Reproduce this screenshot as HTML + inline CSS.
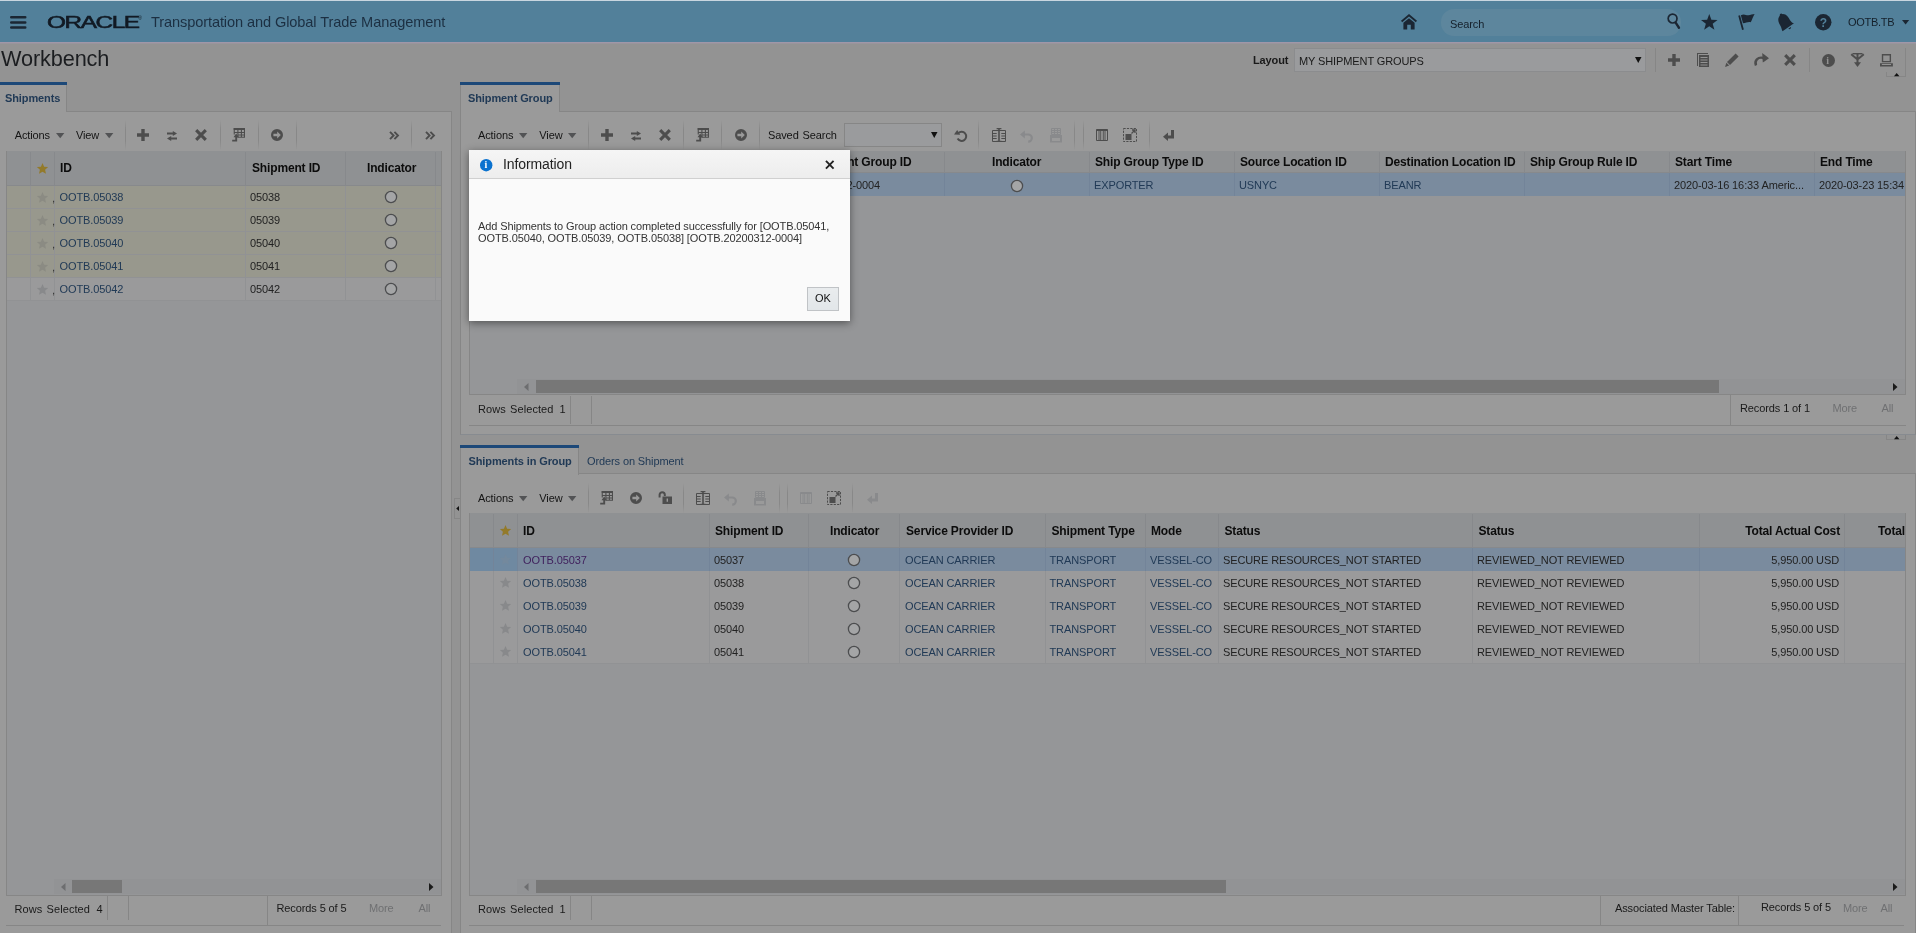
<!DOCTYPE html>
<html lang="en"><head><meta charset="utf-8"><title>Workbench</title><style>
html,body{margin:0;padding:0}
html{width:1916px;height:933px;overflow:hidden}
body{will-change:transform;width:1916px;height:933px;overflow:hidden;position:relative;background:#939393;font-family:"Liberation Sans",sans-serif;color:#161616}
body div,body svg.i,body span.t{position:absolute}
span.t{white-space:nowrap;letter-spacing:-0.11px}
svg.i{overflow:visible;stroke-width:0}
</style></head><body>
<div style="left:0px;top:0px;width:1916px;height:1px;background:#c9d6e0;"></div>
<div style="left:0px;top:1px;width:1916px;height:41px;background:#52809a;"></div>
<div style="left:0px;top:42px;width:1916px;height:1px;background:#a097a8;"></div>
<div style="left:0px;top:43px;width:1916px;height:1px;background:#99949c;"></div>
<svg class="i" style="left:10.05px;top:15.8px;" width="16.5" height="13" viewBox="0 0 16.5 13" fill="#1b2633" stroke="#1b2633"><path fill="none" stroke-width="2.500" stroke-linecap="round" d="M1.250 1.250h14M1.250 6.400h14M1.250 11.550h14"/></svg>
<span class="t" style="left:47px;top:11.800px;font-size:15.600px;line-height:22px;color:#121a24;letter-spacing:-0.900px;-webkit-text-stroke:0.550px #121a24;transform-origin:0 50%;transform:scaleX(1.560)">ORACLE</span>
<span class="t " style="top:14.5px;font-size:5px;line-height:6px;left:138.3px;color:#121a24;">&#174;</span>
<span class="t " style="top:13px;font-size:14.6px;line-height:18px;left:151px;color:#1c2f42;">Transportation and Global Trade Management</span>
<svg class="i" style="left:1401px;top:14.45px;" width="16" height="15.5" viewBox="0 0 16 15.5" fill="#1b2633" stroke="#1b2633"><path stroke="none" d="M8 0L16 6.800l-1.200 1.400L8 2.600 1.200 8.200 0 6.800zM8 4.200l5.600 4.600v6.700H9.800v-4.700H6.200v4.700H2.400V8.800z"/></svg>
<div style="left:1441px;top:9px;width:240px;height:27px;background:#5d869d;border-radius:13px;"></div>
<span class="t " style="top:17px;font-size:11px;line-height:14px;left:1450px;color:#15202b;">Search</span>
<svg class="i" style="left:1666.75px;top:13.4px;" width="13.5" height="16.2" viewBox="0 0 15 18" fill="#1b2633" stroke="#1b2633"><circle cx="6.2" cy="6.2" r="4.9" fill="none" stroke-width="1.9"/><path fill="none" stroke-width="2.6" stroke-linecap="round" d="M9.6 10.6l3.7 5.8"/></svg>
<svg class="i" style="left:1700.52px;top:14.18px;" width="16.56" height="15.64" viewBox="0 0 18 17" fill="#1b2633" stroke="#1b2633"><path stroke="none" d="M9 0l2.3 6.2 6.7.3-5.3 4.1 1.9 6.4L9 13.3 3.4 17l1.9-6.400L0 6.500l6.700-.300z"/></svg>
<svg class="i" style="left:1737.95px;top:13.925px;" width="17.1" height="16.15" viewBox="0 0 18 17" fill="#1b2633" stroke="#1b2633"><path fill="none" stroke-width="1.9" d="M1.2 1.6L5.2 16.6"/><path stroke="none" d="M3 1.400C6.500-.800 8.500 1.600 11 1.300c2.300-.300 4.200-1.200 6.500-1.300C15.800 2.800 15 5.800 13.400 8.600 10.600 7.600 8 9.800 5.200 9.600z"/></svg>
<svg class="i" style="left:1776.92px;top:13.475px;transform:rotate(-18deg);" width="16.15" height="18.05" viewBox="0 0 17 19" fill="#1b2633" stroke="#1b2633"><path stroke="none" d="M5.400 1.200a1.500 1.500 0 0 1 2.900-.500C12.500 1.600 13.200 5.800 14.200 9.600c.500 2 1.600 3.300 2.800 4.100L3 17.800C2.600 16 3 14.400 2.700 12.400 2.100 8.600.800 4.600 5.400 1.200zM9.500 17.300l3.300-1a1.800 1.800 0 0 1-3.300 1z"/></svg>
<svg class="i" style="left:1815.26px;top:13.755px;" width="16.49" height="16.49" viewBox="0 0 17 17" fill="#1b2633" stroke="#1b2633"><circle cx="8.500" cy="8.500" r="8.500" stroke="none"/></svg>
<span class="t " style="top:15.5px;font-size:12px;line-height:14px;left:1819.8px;color:#52809a;font-weight:bold;letter-spacing:-0.150px;">?</span>
<span class="t " style="top:15px;font-size:11px;line-height:14px;left:1848px;color:#15202b;letter-spacing:-0.3px;">OOTB.TB</span>
<svg class="i" style="left:1902.2px;top:20.25px;" width="7.2" height="4.5" viewBox="0 0 8 5" fill="#1b2633" stroke="#1b2633"><path stroke="none" d="M0 0h8L4 5z"/></svg>
<span class="t " style="top:46px;font-size:21.7px;line-height:26px;left:1px;color:#1b1d20;">Workbench</span>
<span class="t " style="top:53px;font-size:11px;line-height:14px;left:1253px;color:#1a1a1a;font-weight:bold;">Layout</span>
<div style="left:1294px;top:48px;width:352px;height:24px;background:#9a9b9d;border:1px solid #8b8c8e;box-sizing:border-box;"></div>
<span class="t " style="top:54px;font-size:11px;line-height:14px;left:1299px;color:#1a1a1a;">MY SHIPMENT GROUPS</span>
<svg class="i" style="left:1634.75px;top:56.5px;" width="6.5" height="6" viewBox="0 0 6.5 6" fill="#111" stroke="#111"><path stroke="none" d="M0 0h6.500L3.250 6z"/></svg>
<div style="left:1655px;top:48px;width:1px;height:24px;background:#868686;"></div>
<svg class="i" style="left:1668px;top:54px;" width="12" height="12" viewBox="0 0 12 12" fill="#4d4d4d" stroke="#4d4d4d"><path stroke="none" d="M4.3 0h3.4v4.3H12v3.4H7.7V12H4.3V7.7H0V4.3h4.3z"/></svg>
<svg class="i" style="left:1697px;top:53px;" width="12" height="14" viewBox="0 0 12 14" fill="#4d4d4d" stroke="#4d4d4d"><path stroke="none" d="M0 0h11v1H1v12H0zM2 2h10v12H2zM3.500 4v1h7V4zM3.500 6.500v1h7v-1zM3.500 9v1h7V9zM3.500 11.500v1h7v-1z" fill-rule="evenodd"/></svg>
<svg class="i" style="left:1725px;top:53px;" width="14" height="14" viewBox="0 0 14 14" fill="#4d4d4d" stroke="#4d4d4d"><path stroke="none" d="M10.600.400l3 3L5 12 2 9zM1.400 9.800l2.800 2.800L0 14z"/></svg>
<svg class="i" style="left:1753.5px;top:53px;" width="15" height="13" viewBox="0 0 15 13" fill="#4d4d4d" stroke="#4d4d4d"><path fill="none" stroke-width="2.400" d="M2 12.500C0 7.500 4 3.500 9.500 5"/><path stroke="none" d="M8.200 0L15 5.200 8.800 9.600z"/></svg>
<svg class="i" style="left:1784px;top:54px;" width="12" height="12" viewBox="0 0 12 12" fill="#4d4d4d" stroke="#4d4d4d"><path fill="none" stroke-width="3.1" d="M1.2 1.2l9.6 9.6M10.8 1.2l-9.6 9.6"/></svg>
<div style="left:1809px;top:48px;width:1px;height:24px;background:#868686;"></div>
<svg class="i" style="left:1821.5px;top:53.5px;" width="13" height="13" viewBox="0 0 13 13" fill="#4d4d4d" stroke="#4d4d4d"><circle cx="6.500" cy="6.500" r="6.500" stroke="none"/></svg>
<span class="t " style="top:54.5px;font-size:10px;line-height:12px;left:1826.3px;color:#939393;font-weight:bold;font-family:'Liberation Serif',serif;">i</span>
<svg class="i" style="left:1849.5px;top:53px;" width="15" height="14" viewBox="0 0 15 14" fill="#4d4d4d" stroke="#4d4d4d"><path fill="none" stroke-width="2" d="M1.200 1.200l6.300 5.300L13.800 1.200M7.500 0.200v10"/><path fill="none" stroke-width="1.400" d="M2.500 0.700h10"/><path stroke="none" d="M4 9.300h7L7.500 14z"/></svg>
<svg class="i" style="left:1880.06px;top:53.56px;" width="12.88" height="12.88" viewBox="0 0 14 14" fill="#4d4d4d" stroke="#4d4d4d"><path stroke="none" fill-rule="evenodd" d="M2 0h10v9H2zM3.500 1.500v6h7v-6zM0 10h14v3.500H0zM2 11v1h10v-1z"/></svg>
<div style="left:1905px;top:48px;width:1px;height:24px;background:#868686;"></div>
<div style="left:1886px;top:72px;width:20px;height:5px;border:1px solid #868686;border-top:none;box-sizing:border-box;"></div>
<svg class="i" style="left:1893.8px;top:72.5px" width="5.400" height="3.200" viewBox="0 0 7 4" fill="#111"><path d="M0 4L3.500 0 7 4z"/></svg>
<div style="left:0px;top:111px;width:452px;height:822px;background:#9a9a9a;border-top:1px solid #868686;border-right:1px solid #868686;box-sizing:border-box;"></div>
<div style="left:-1px;top:82px;width:68px;height:30px;background:#9a9a9a;border-left:1px solid #868686;border-right:1px solid #868686;box-sizing:border-box;"></div>
<div style="left:-1px;top:82px;width:68px;height:3px;background:#1c4878;"></div>
<span class="t " style="top:91px;font-size:11px;line-height:14px;left:5px;color:#213a56;font-weight:bold;">Shipments</span>
<span class="t " style="top:128px;font-size:11px;line-height:14px;left:14.7px;color:#141414;">Actions</span>
<svg class="i" style="left:55.8px;top:133.375px;" width="8.4" height="5.25" viewBox="0 0 8 5" fill="#525355" stroke="#525355"><path stroke="none" d="M0 0h8L4 5z"/></svg>
<span class="t " style="top:128px;font-size:11px;line-height:14px;left:76px;color:#141414;">View</span>
<svg class="i" style="left:104.8px;top:133.375px;" width="8.4" height="5.25" viewBox="0 0 8 5" fill="#525355" stroke="#525355"><path stroke="none" d="M0 0h8L4 5z"/></svg>
<div style="left:125px;top:120px;width:1px;height:30px;background:linear-gradient(to bottom,rgba(134,134,134,0),#888 30%,#888 70%,rgba(134,134,134,0));"></div>
<svg class="i" style="left:137px;top:129px;" width="12" height="12" viewBox="0 0 12 12" fill="#4d4d4d" stroke="#4d4d4d"><path stroke="none" d="M4.3 0h3.4v4.3H12v3.4H7.7V12H4.3V7.7H0V4.3h4.3z"/></svg>
<svg class="i" style="left:167px;top:130.5px;" width="10" height="10" viewBox="0 0 10 10" fill="#4d4d4d" stroke="#4d4d4d"><path stroke="none" d="M0 1.500h5.800V0L10 2.500 5.800 5V3.500H0zM10 6.500H4.200V5L0 7.500 4.200 10V8.500H10z"/></svg>
<svg class="i" style="left:194.5px;top:129px;" width="12" height="12" viewBox="0 0 12 12" fill="#4d4d4d" stroke="#4d4d4d"><path fill="none" stroke-width="3.1" d="M1.2 1.2l9.6 9.6M10.8 1.2l-9.6 9.6"/></svg>
<div style="left:220px;top:120px;width:1px;height:30px;background:linear-gradient(to bottom,rgba(134,134,134,0),#888 30%,#888 70%,rgba(134,134,134,0));"></div>
<svg class="i" style="left:231.5px;top:128px;" width="14" height="14" viewBox="0 0 14 14" fill="#4d4d4d" stroke="#4d4d4d"><path stroke="none" d="M1.700 0H13v2H1.700z"/><path fill="none" stroke-width="1.100" d="M2.250 0v6.500M5.900 0v9.500M9.400 0v9.500M12.450 0v9.500M1.700 4.500H13M5.400 7H13M5.400 9.300H13"/><path fill="none" stroke-width="1.900" d="M0.200 12.600H4.200V8.500"/><path stroke="none" d="M4.200 5.600L6.900 9.200H1.500z"/></svg>
<div style="left:258px;top:120px;width:1px;height:30px;background:linear-gradient(to bottom,rgba(134,134,134,0),#888 30%,#888 70%,rgba(134,134,134,0));"></div>
<svg class="i" style="left:271px;top:129px;" width="12" height="12" viewBox="0 0 12 12" fill="#4d4d4d" stroke="#4d4d4d"><path stroke="none" fill-rule="evenodd" d="M6 0a6 6 0 1 0 0 12A6 6 0 0 0 6 0zM6.2 2.6L9.8 6 6.2 9.4V7.2H2.4V4.8h3.8z"/></svg>
<div style="left:296px;top:120px;width:1px;height:30px;background:linear-gradient(to bottom,rgba(134,134,134,0),#888 30%,#888 70%,rgba(134,134,134,0));"></div>
<svg class="i" style="left:389px;top:131px;" width="10" height="9" viewBox="0 0 10 9" fill="#4d4d4d" stroke="#4d4d4d"><path fill="none" stroke-width="1.900" d="M1 0.8L4.6 4.5 1 8.2M5.4 0.8L9 4.5 5.4 8.2"/></svg>
<div style="left:411px;top:120px;width:1px;height:30px;background:linear-gradient(to bottom,rgba(134,134,134,0),#888 30%,#888 70%,rgba(134,134,134,0));"></div>
<svg class="i" style="left:425px;top:131px;" width="10" height="9" viewBox="0 0 10 9" fill="#4d4d4d" stroke="#4d4d4d"><path fill="none" stroke-width="1.900" d="M1 0.8L4.6 4.5 1 8.2M5.4 0.8L9 4.5 5.4 8.2"/></svg>
<div style="left:6px;top:151px;width:436px;height:745px;background:#959698;border:1px solid #868686;box-sizing:border-box;"></div>
<div style="left:7px;top:151px;width:434px;height:34px;background:#8f9193;"></div>
<div style="left:7px;top:185px;width:434px;height:1px;background:#87898c;"></div>
<div style="left:30px;top:152px;width:1px;height:33px;background:#87898c;"></div>
<div style="left:54px;top:152px;width:1px;height:33px;background:#87898c;"></div>
<div style="left:245px;top:152px;width:1px;height:33px;background:#87898c;"></div>
<div style="left:345px;top:152px;width:1px;height:33px;background:#87898c;"></div>
<div style="left:435px;top:152px;width:1px;height:33px;background:#87898c;"></div>
<svg class="i" style="left:36.5px;top:162.5px;" width="11" height="11" viewBox="0 0 11 11" fill="#937a2a" stroke="#937a2a"><path stroke="none" d="M5.500 0l1.600 3.800 4 .300-3 2.700.9 4L5.500 8.700 2 10.800l.9-4-3-2.700 4-.300z"/></svg>
<span class="t " style="top:161px;font-size:12px;line-height:14px;left:60px;color:#0c0c0c;font-weight:bold;letter-spacing:-0.150px;">ID</span>
<span class="t " style="top:161px;font-size:12px;line-height:14px;left:252px;color:#0c0c0c;font-weight:bold;letter-spacing:-0.150px;">Shipment ID</span>
<span class="t " style="top:161px;font-size:12px;line-height:14px;left:367px;color:#0c0c0c;font-weight:bold;letter-spacing:-0.150px;">Indicator</span>
<div style="left:7px;top:186px;width:434px;height:22px;background:#98988d;"></div>
<div style="left:7px;top:208px;width:434px;height:1px;background:#919294;"></div>
<div style="left:30px;top:186px;width:1px;height:23px;background:#919294;"></div>
<div style="left:54px;top:186px;width:1px;height:23px;background:#919294;"></div>
<div style="left:245px;top:186px;width:1px;height:23px;background:#919294;"></div>
<div style="left:345px;top:186px;width:1px;height:23px;background:#919294;"></div>
<div style="left:435px;top:186px;width:1px;height:23px;background:#919294;"></div>
<svg class="i" style="left:36.5px;top:192px;" width="11" height="11" viewBox="0 0 11 11" fill="#8b8b83" stroke="#8b8b83"><path stroke="none" d="M5.500 0l1.600 3.800 4 .300-3 2.700.9 4L5.500 8.700 2 10.800l.9-4-3-2.700 4-.300z"/></svg>
<span class="t " style="top:191.5px;font-size:10px;line-height:14px;left:52.2px;color:#2a2a2a;">,</span>
<span class="t " style="top:189.5px;font-size:11px;line-height:14px;left:59.5px;color:#213a56;">OOTB.05038</span>
<span class="t " style="top:189.5px;font-size:11px;line-height:14px;left:250px;color:#222;">05038</span>
<svg class="i" style="left:384px;top:190px" width="14" height="14" viewBox="0 0 14 14"><circle cx="7" cy="7" r="5.600" fill="#a4a5a6" stroke="#4c4d4f" stroke-width="1.300"/></svg>
<div style="left:7px;top:209px;width:434px;height:22px;background:#98988d;"></div>
<div style="left:7px;top:231px;width:434px;height:1px;background:#919294;"></div>
<div style="left:30px;top:209px;width:1px;height:23px;background:#919294;"></div>
<div style="left:54px;top:209px;width:1px;height:23px;background:#919294;"></div>
<div style="left:245px;top:209px;width:1px;height:23px;background:#919294;"></div>
<div style="left:345px;top:209px;width:1px;height:23px;background:#919294;"></div>
<div style="left:435px;top:209px;width:1px;height:23px;background:#919294;"></div>
<svg class="i" style="left:36.5px;top:215px;" width="11" height="11" viewBox="0 0 11 11" fill="#8b8b83" stroke="#8b8b83"><path stroke="none" d="M5.500 0l1.600 3.800 4 .300-3 2.700.9 4L5.500 8.700 2 10.800l.9-4-3-2.700 4-.300z"/></svg>
<span class="t " style="top:214.5px;font-size:10px;line-height:14px;left:52.2px;color:#2a2a2a;">,</span>
<span class="t " style="top:212.5px;font-size:11px;line-height:14px;left:59.5px;color:#213a56;">OOTB.05039</span>
<span class="t " style="top:212.5px;font-size:11px;line-height:14px;left:250px;color:#222;">05039</span>
<svg class="i" style="left:384px;top:213px" width="14" height="14" viewBox="0 0 14 14"><circle cx="7" cy="7" r="5.600" fill="#a4a5a6" stroke="#4c4d4f" stroke-width="1.300"/></svg>
<div style="left:7px;top:232px;width:434px;height:22px;background:#98988d;"></div>
<div style="left:7px;top:254px;width:434px;height:1px;background:#919294;"></div>
<div style="left:30px;top:232px;width:1px;height:23px;background:#919294;"></div>
<div style="left:54px;top:232px;width:1px;height:23px;background:#919294;"></div>
<div style="left:245px;top:232px;width:1px;height:23px;background:#919294;"></div>
<div style="left:345px;top:232px;width:1px;height:23px;background:#919294;"></div>
<div style="left:435px;top:232px;width:1px;height:23px;background:#919294;"></div>
<svg class="i" style="left:36.5px;top:238px;" width="11" height="11" viewBox="0 0 11 11" fill="#8b8b83" stroke="#8b8b83"><path stroke="none" d="M5.500 0l1.600 3.800 4 .300-3 2.700.9 4L5.500 8.700 2 10.800l.9-4-3-2.700 4-.300z"/></svg>
<span class="t " style="top:237.5px;font-size:10px;line-height:14px;left:52.2px;color:#2a2a2a;">,</span>
<span class="t " style="top:235.5px;font-size:11px;line-height:14px;left:59.5px;color:#213a56;">OOTB.05040</span>
<span class="t " style="top:235.5px;font-size:11px;line-height:14px;left:250px;color:#222;">05040</span>
<svg class="i" style="left:384px;top:236px" width="14" height="14" viewBox="0 0 14 14"><circle cx="7" cy="7" r="5.600" fill="#a4a5a6" stroke="#4c4d4f" stroke-width="1.300"/></svg>
<div style="left:7px;top:255px;width:434px;height:22px;background:#98988d;"></div>
<div style="left:7px;top:277px;width:434px;height:1px;background:#919294;"></div>
<div style="left:30px;top:255px;width:1px;height:23px;background:#919294;"></div>
<div style="left:54px;top:255px;width:1px;height:23px;background:#919294;"></div>
<div style="left:245px;top:255px;width:1px;height:23px;background:#919294;"></div>
<div style="left:345px;top:255px;width:1px;height:23px;background:#919294;"></div>
<div style="left:435px;top:255px;width:1px;height:23px;background:#919294;"></div>
<svg class="i" style="left:36.5px;top:261px;" width="11" height="11" viewBox="0 0 11 11" fill="#8b8b83" stroke="#8b8b83"><path stroke="none" d="M5.500 0l1.600 3.800 4 .300-3 2.700.9 4L5.500 8.700 2 10.800l.9-4-3-2.700 4-.300z"/></svg>
<span class="t " style="top:260.5px;font-size:10px;line-height:14px;left:52.2px;color:#2a2a2a;">,</span>
<span class="t " style="top:258.5px;font-size:11px;line-height:14px;left:59.5px;color:#213a56;">OOTB.05041</span>
<span class="t " style="top:258.5px;font-size:11px;line-height:14px;left:250px;color:#222;">05041</span>
<svg class="i" style="left:384px;top:259px" width="14" height="14" viewBox="0 0 14 14"><circle cx="7" cy="7" r="5.600" fill="#a4a5a6" stroke="#4c4d4f" stroke-width="1.300"/></svg>
<div style="left:7px;top:278px;width:434px;height:22px;background:#9a9a9b;"></div>
<div style="left:7px;top:300px;width:434px;height:1px;background:#919294;"></div>
<div style="left:30px;top:278px;width:1px;height:23px;background:#919294;"></div>
<div style="left:54px;top:278px;width:1px;height:23px;background:#919294;"></div>
<div style="left:245px;top:278px;width:1px;height:23px;background:#919294;"></div>
<div style="left:345px;top:278px;width:1px;height:23px;background:#919294;"></div>
<div style="left:435px;top:278px;width:1px;height:23px;background:#919294;"></div>
<svg class="i" style="left:36.5px;top:284px;" width="11" height="11" viewBox="0 0 11 11" fill="#88898b" stroke="#88898b"><path stroke="none" d="M5.500 0l1.600 3.800 4 .300-3 2.700.9 4L5.500 8.700 2 10.800l.9-4-3-2.700 4-.300z"/></svg>
<span class="t " style="top:283.5px;font-size:10px;line-height:14px;left:52.2px;color:#2a2a2a;">,</span>
<span class="t " style="top:281.5px;font-size:11px;line-height:14px;left:59.5px;color:#213a56;">OOTB.05042</span>
<span class="t " style="top:281.5px;font-size:11px;line-height:14px;left:250px;color:#222;">05042</span>
<svg class="i" style="left:384px;top:282px" width="14" height="14" viewBox="0 0 14 14"><circle cx="7" cy="7" r="5.600" fill="#a4a5a6" stroke="#4c4d4f" stroke-width="1.300"/></svg>
<div style="left:54px;top:879px;width:387px;height:15px;background:#929395;"></div>
<div style="left:72px;top:880px;width:50px;height:13px;background:#777777;"></div>
<svg class="i" style="left:61px;top:882.5px" width="4.500" height="8" viewBox="0 0 5 9" fill="#6d6e70"><path d="M5 0v9L0 4.500z"/></svg>
<svg class="i" style="left:429px;top:882.5px" width="4.500" height="8" viewBox="0 0 5 9" fill="#1a1a1a"><path d="M0 0v9l5-4.500z"/></svg>
<span class="t " style="top:902px;font-size:11px;line-height:14px;left:14.5px;color:#1a1a1a;word-spacing:1px;letter-spacing:0.090px;">Rows Selected</span>
<span class="t " style="top:902px;font-size:11px;line-height:14px;right:1813.4px;color:#1a1a1a;">4</span>
<div style="left:107px;top:896px;width:1px;height:24px;background:#868686;"></div>
<div style="left:128px;top:896px;width:1px;height:24px;background:#868686;"></div>
<div style="left:267px;top:896px;width:1px;height:29px;background:#868686;"></div>
<span class="t " style="top:901px;font-size:11px;line-height:14px;left:276.5px;color:#1a1a1a;">Records 5 of 5</span>
<span class="t " style="top:901px;font-size:11px;line-height:14px;left:369px;color:#6f7072;">More</span>
<span class="t " style="top:901px;font-size:11px;line-height:14px;left:418.5px;color:#6f7072;">All</span>
<div style="left:6px;top:925px;width:435px;height:1px;background:#868686;"></div>
<div style="left:454px;top:498px;width:7px;height:21px;border:1px solid #868686;border-right:none;box-sizing:border-box;"></div>
<svg class="i" style="left:455.800px;top:506px" width="3.200" height="5" viewBox="0 0 4 7" fill="#111"><path d="M4 0v7L0 3.500z"/></svg>
<div style="left:460px;top:111px;width:1456px;height:324px;background:#9a9a9a;border:1px solid #868686;border-bottom-color:#878b90;box-sizing:border-box;"></div>
<div style="left:460px;top:82px;width:100px;height:30px;background:#9a9a9a;border-left:1px solid #868686;border-right:1px solid #868686;box-sizing:border-box;"></div>
<div style="left:460px;top:82px;width:100px;height:3px;background:#1c4878;"></div>
<span class="t " style="top:91px;font-size:11px;line-height:14px;left:468px;color:#213a56;font-weight:bold;">Shipment Group</span>
<span class="t " style="top:128px;font-size:11px;line-height:14px;left:478px;color:#141414;">Actions</span>
<svg class="i" style="left:519.1px;top:133.375px;" width="8.4" height="5.25" viewBox="0 0 8 5" fill="#525355" stroke="#525355"><path stroke="none" d="M0 0h8L4 5z"/></svg>
<span class="t " style="top:128px;font-size:11px;line-height:14px;left:539.3px;color:#141414;">View</span>
<svg class="i" style="left:568.1px;top:133.375px;" width="8.4" height="5.25" viewBox="0 0 8 5" fill="#525355" stroke="#525355"><path stroke="none" d="M0 0h8L4 5z"/></svg>
<div style="left:588px;top:120px;width:1px;height:30px;background:linear-gradient(to bottom,rgba(134,134,134,0),#888 30%,#888 70%,rgba(134,134,134,0));"></div>
<svg class="i" style="left:600.5px;top:129px;" width="12" height="12" viewBox="0 0 12 12" fill="#4d4d4d" stroke="#4d4d4d"><path stroke="none" d="M4.3 0h3.4v4.3H12v3.4H7.7V12H4.3V7.7H0V4.3h4.3z"/></svg>
<svg class="i" style="left:630.5px;top:130.5px;" width="10" height="10" viewBox="0 0 10 10" fill="#4d4d4d" stroke="#4d4d4d"><path stroke="none" d="M0 1.500h5.800V0L10 2.500 5.800 5V3.500H0zM10 6.500H4.200V5L0 7.500 4.200 10V8.500H10z"/></svg>
<svg class="i" style="left:658.5px;top:129px;" width="12" height="12" viewBox="0 0 12 12" fill="#4d4d4d" stroke="#4d4d4d"><path fill="none" stroke-width="3.1" d="M1.2 1.2l9.6 9.6M10.8 1.2l-9.6 9.6"/></svg>
<div style="left:683px;top:120px;width:1px;height:30px;background:linear-gradient(to bottom,rgba(134,134,134,0),#888 30%,#888 70%,rgba(134,134,134,0));"></div>
<svg class="i" style="left:695.5px;top:128px;" width="14" height="14" viewBox="0 0 14 14" fill="#4d4d4d" stroke="#4d4d4d"><path stroke="none" d="M1.700 0H13v2H1.700z"/><path fill="none" stroke-width="1.100" d="M2.250 0v6.500M5.900 0v9.500M9.400 0v9.500M12.450 0v9.500M1.700 4.500H13M5.400 7H13M5.400 9.300H13"/><path fill="none" stroke-width="1.900" d="M0.200 12.600H4.200V8.500"/><path stroke="none" d="M4.200 5.600L6.900 9.200H1.500z"/></svg>
<div style="left:721px;top:120px;width:1px;height:30px;background:linear-gradient(to bottom,rgba(134,134,134,0),#888 30%,#888 70%,rgba(134,134,134,0));"></div>
<svg class="i" style="left:734.5px;top:129px;" width="12" height="12" viewBox="0 0 12 12" fill="#4d4d4d" stroke="#4d4d4d"><path stroke="none" fill-rule="evenodd" d="M6 0a6 6 0 1 0 0 12A6 6 0 0 0 6 0zM6.2 2.6L9.8 6 6.2 9.4V7.2H2.4V4.8h3.8z"/></svg>
<div style="left:759px;top:120px;width:1px;height:30px;background:linear-gradient(to bottom,rgba(134,134,134,0),#888 30%,#888 70%,rgba(134,134,134,0));"></div>
<span class="t " style="top:128px;font-size:11px;line-height:14px;left:768px;color:#141414;word-spacing:1px;">Saved Search</span>
<div style="left:844px;top:123px;width:98px;height:24px;background:#9a9b9d;border:1px solid #868686;box-sizing:border-box;"></div>
<svg class="i" style="left:930.75px;top:132px;" width="6.5" height="6" viewBox="0 0 6.5 6" fill="#111" stroke="#111"><path stroke="none" d="M0 0h6.500L3.250 6z"/></svg>
<svg class="i" style="left:953.5px;top:129.5px;" width="14" height="12" viewBox="0 0 14 12" fill="#4d4d4d" stroke="#4d4d4d"><path fill="none" stroke-width="2" d="M4.3 3.1A4.6 4.6 0 1 1 3.6 8.6"/><path stroke="none" d="M0 4.6L6.2 4.8 3.2 0z"/></svg>
<div style="left:978px;top:120px;width:1px;height:30px;background:linear-gradient(to bottom,rgba(134,134,134,0),#888 30%,#888 70%,rgba(134,134,134,0));"></div>
<svg class="i" style="left:991.5px;top:128px;" width="14" height="14" viewBox="0 0 14 14" fill="#4d4d4d" stroke="#4d4d4d"><path fill="none" stroke-width="1" d="M0.500 2.500h13v11h-13zM9.300 5.500h4.200M9.300 8h4.200M9.300 10.500h4.200M0.500 5.500h4.200M0.500 8h4.200M0.500 10.500h4.200"/><path fill="none" stroke-width="1.600" d="M7 0.800v12.400"/><path fill="none" stroke-width="1.200" d="M4.600 0.600h4.800M4.600 13.400h4.800"/></svg>
<svg class="i" style="left:1020px;top:129.5px;" width="14" height="12" viewBox="0 0 14 12" fill="#898a8c" stroke="#898a8c"><path fill="none" stroke-width="2.2" d="M3 4.5h5.2a3.6 3.6 0 0 1 0 7.2"/><path stroke="none" d="M0 4.5L4.8 0.6v7.8z"/></svg>
<svg class="i" style="left:1049.5px;top:128px;" width="12" height="15" viewBox="0 0 12 15" fill="#898a8c" stroke="#898a8c"><path fill="none" stroke-width="1" d="M1.500 0.500h9v6h-9zM1.500 2.500h9M1.500 4.500h9M4.500 0.500v6M7.500 0.500v6"/><path stroke="none" d="M0 7h12v7.500H0zM2 10v3h8v-3z" fill-rule="evenodd"/></svg>
<div style="left:1074px;top:120px;width:1px;height:30px;background:linear-gradient(to bottom,rgba(134,134,134,0),#888 30%,#888 70%,rgba(134,134,134,0));"></div>
<div style="left:1083px;top:120px;width:1px;height:30px;background:linear-gradient(to bottom,rgba(134,134,134,0),#888 30%,#888 70%,rgba(134,134,134,0));"></div>
<svg class="i" style="left:1095.5px;top:129px;" width="12" height="12" viewBox="0 0 12 12" fill="#4d4d4d" stroke="#4d4d4d"><path fill="none" stroke-width="1" d="M0.500 0.500h11v11h-11z"/><path fill="none" stroke-width="0.900" d="M3 1v10M4.700 1v10M7.300 1v10M9 1v10"/><path stroke="none" d="M0.500 0.500h11v1.500h-11z"/></svg>
<svg class="i" style="left:1123px;top:128px;" width="14" height="14" viewBox="0 0 14 14" fill="#4d4d4d" stroke="#4d4d4d"><path fill="none" stroke-width="1" stroke-dasharray="2.2 1.2" d="M0.5 0.5h13v13h-13z"/><path stroke="none" d="M2.5 6h6v6h-6z"/><path fill="none" stroke-width="1.3" d="M8.5 5.5l3.5-3.5M9 2h3v3"/></svg>
<div style="left:1149px;top:120px;width:1px;height:30px;background:linear-gradient(to bottom,rgba(134,134,134,0),#888 30%,#888 70%,rgba(134,134,134,0));"></div>
<svg class="i" style="left:1163px;top:129.5px;" width="11" height="11" viewBox="0 0 11 11" fill="#4d4d4d" stroke="#4d4d4d"><path stroke="none" d="M8 0h3v8.4H5V11L0 6.8 5 2.6v2.8h3z"/></svg>
<div style="left:469px;top:151px;width:1437px;height:244px;background:#959698;border:1px solid #868686;box-sizing:border-box;"></div>
<div style="left:470px;top:151px;width:1435px;height:22px;background:#8f9193;"></div>
<div style="left:470px;top:173px;width:1435px;height:23px;background:#7a8b9e;"></div>
<div style="left:944px;top:152px;width:1px;height:21px;background:#87898c;"></div>
<div style="left:944px;top:173px;width:1px;height:23px;background:#738499;"></div>
<div style="left:1089px;top:152px;width:1px;height:21px;background:#87898c;"></div>
<div style="left:1089px;top:173px;width:1px;height:23px;background:#738499;"></div>
<div style="left:1234px;top:152px;width:1px;height:21px;background:#87898c;"></div>
<div style="left:1234px;top:173px;width:1px;height:23px;background:#738499;"></div>
<div style="left:1379px;top:152px;width:1px;height:21px;background:#87898c;"></div>
<div style="left:1379px;top:173px;width:1px;height:23px;background:#738499;"></div>
<div style="left:1524px;top:152px;width:1px;height:21px;background:#87898c;"></div>
<div style="left:1524px;top:173px;width:1px;height:23px;background:#738499;"></div>
<div style="left:1669px;top:152px;width:1px;height:21px;background:#87898c;"></div>
<div style="left:1669px;top:173px;width:1px;height:23px;background:#738499;"></div>
<div style="left:1814px;top:152px;width:1px;height:21px;background:#87898c;"></div>
<div style="left:1814px;top:173px;width:1px;height:23px;background:#738499;"></div>
<div style="left:470px;top:172px;width:1435px;height:1px;background:#87898c;"></div>
<span class="t " style="top:155px;font-size:12px;line-height:14px;right:1004.5px;color:#0c0c0c;font-weight:bold;letter-spacing:-0.150px;">Shipment Group ID</span>
<span class="t " style="top:155px;font-size:12px;line-height:14px;left:992px;color:#0c0c0c;font-weight:bold;letter-spacing:-0.150px;">Indicator</span>
<span class="t " style="top:155px;font-size:12px;line-height:14px;left:1095px;color:#0c0c0c;font-weight:bold;letter-spacing:-0.150px;">Ship Group Type ID</span>
<span class="t " style="top:155px;font-size:12px;line-height:14px;left:1240px;color:#0c0c0c;font-weight:bold;letter-spacing:-0.150px;">Source Location ID</span>
<span class="t " style="top:155px;font-size:12px;line-height:14px;left:1385px;color:#0c0c0c;font-weight:bold;letter-spacing:-0.150px;">Destination Location ID</span>
<span class="t " style="top:155px;font-size:12px;line-height:14px;left:1530px;color:#0c0c0c;font-weight:bold;letter-spacing:-0.150px;">Ship Group Rule ID</span>
<span class="t " style="top:155px;font-size:12px;line-height:14px;left:1675px;color:#0c0c0c;font-weight:bold;letter-spacing:-0.150px;">Start Time</span>
<span class="t " style="top:155px;font-size:12px;line-height:14px;left:1820px;color:#0c0c0c;font-weight:bold;letter-spacing:-0.150px;">End Time</span>
<span class="t " style="top:178px;font-size:11px;line-height:14px;right:1036px;color:#222;">OOTB.20200312-0004</span>
<svg class="i" style="left:1009.5px;top:178.5px" width="14" height="14" viewBox="0 0 14 14"><circle cx="7" cy="7" r="5.600" fill="#a4a5a6" stroke="#4c4d4f" stroke-width="1.300"/></svg>
<span class="t " style="top:178px;font-size:11px;line-height:14px;left:1094px;color:#213a56;">EXPORTER</span>
<span class="t " style="top:178px;font-size:11px;line-height:14px;left:1239px;color:#213a56;">USNYC</span>
<span class="t " style="top:178px;font-size:11px;line-height:14px;left:1384px;color:#213a56;">BEANR</span>
<span class="t " style="top:178px;font-size:11px;line-height:14px;left:1674px;color:#222;">2020-03-16 16:33 Americ...</span>
<div style="left:1819px;top:178px;width:86px;height:14px;overflow:hidden"><span class="t" style="left:0;top:0;font-size:11px;line-height:14px;color:#222">2020-03-23 15:34 America</span></div>
<div style="left:517px;top:379px;width:1388px;height:15px;background:#929395;"></div>
<div style="left:536px;top:380px;width:1183px;height:13px;background:#777777;"></div>
<svg class="i" style="left:524px;top:382.5px" width="4.500" height="8" viewBox="0 0 5 9" fill="#6d6e70"><path d="M5 0v9L0 4.500z"/></svg>
<svg class="i" style="left:1893px;top:382.5px" width="4.500" height="8" viewBox="0 0 5 9" fill="#1a1a1a"><path d="M0 0v9l5-4.500z"/></svg>
<span class="t " style="top:402px;font-size:11px;line-height:14px;left:478px;color:#1a1a1a;word-spacing:1px;letter-spacing:0.090px;">Rows Selected</span>
<span class="t " style="top:402px;font-size:11px;line-height:14px;right:1350.4px;color:#1a1a1a;">1</span>
<div style="left:570px;top:396px;width:1px;height:28px;background:#868686;"></div>
<div style="left:591px;top:396px;width:1px;height:28px;background:#868686;"></div>
<div style="left:1730px;top:395px;width:1px;height:30px;background:#868686;"></div>
<span class="t " style="top:401px;font-size:11px;line-height:14px;left:1740px;color:#1a1a1a;">Records 1 of 1</span>
<span class="t " style="top:401px;font-size:11px;line-height:14px;left:1832.5px;color:#6f7072;">More</span>
<span class="t " style="top:401px;font-size:11px;line-height:14px;left:1881.5px;color:#6f7072;">All</span>
<div style="left:469px;top:425px;width:1437px;height:1px;background:#868686;"></div>
<div style="left:1886px;top:435px;width:20px;height:5px;border:1px solid #868686;border-top:none;box-sizing:border-box;"></div>
<svg class="i" style="left:1893.8px;top:435.5px" width="5.400" height="3.200" viewBox="0 0 7 4" fill="#111"><path d="M0 4L3.500 0 7 4z"/></svg>
<div style="left:460px;top:473px;width:1456px;height:460px;background:#9a9a9a;border:1px solid #868686;border-bottom:none;box-sizing:border-box;"></div>
<div style="left:460px;top:445px;width:119px;height:30px;background:#9a9a9a;border-left:1px solid #868686;border-right:1px solid #868686;box-sizing:border-box;"></div>
<div style="left:460px;top:445px;width:119px;height:3px;background:#1c4878;"></div>
<span class="t " style="top:454px;font-size:11px;line-height:14px;left:468.5px;color:#213a56;font-weight:bold;">Shipments in Group</span>
<span class="t " style="top:454px;font-size:11px;line-height:14px;left:587px;color:#213a56;">Orders on Shipment</span>
<span class="t " style="top:491px;font-size:11px;line-height:14px;left:478px;color:#141414;">Actions</span>
<svg class="i" style="left:519.1px;top:496.375px;" width="8.4" height="5.25" viewBox="0 0 8 5" fill="#525355" stroke="#525355"><path stroke="none" d="M0 0h8L4 5z"/></svg>
<span class="t " style="top:491px;font-size:11px;line-height:14px;left:539.3px;color:#141414;">View</span>
<svg class="i" style="left:568.1px;top:496.375px;" width="8.4" height="5.25" viewBox="0 0 8 5" fill="#525355" stroke="#525355"><path stroke="none" d="M0 0h8L4 5z"/></svg>
<div style="left:588px;top:483px;width:1px;height:30px;background:linear-gradient(to bottom,rgba(134,134,134,0),#888 30%,#888 70%,rgba(134,134,134,0));"></div>
<svg class="i" style="left:599.5px;top:491px;" width="14" height="14" viewBox="0 0 14 14" fill="#4d4d4d" stroke="#4d4d4d"><path stroke="none" d="M1.700 0H13v2H1.700z"/><path fill="none" stroke-width="1.100" d="M2.250 0v6.500M5.900 0v9.500M9.400 0v9.500M12.450 0v9.500M1.700 4.500H13M5.400 7H13M5.400 9.300H13"/><path fill="none" stroke-width="1.900" d="M0.200 12.600H4.200V8.500"/><path stroke="none" d="M4.200 5.600L6.900 9.200H1.500z"/></svg>
<svg class="i" style="left:629.5px;top:492px;" width="12" height="12" viewBox="0 0 12 12" fill="#4d4d4d" stroke="#4d4d4d"><path stroke="none" fill-rule="evenodd" d="M6 0a6 6 0 1 0 0 12A6 6 0 0 0 6 0zM6.2 2.6L9.8 6 6.2 9.4V7.2H2.4V4.8h3.8z"/></svg>
<svg class="i" style="left:657.5px;top:491px;" width="14" height="13" viewBox="0 0 14 13" fill="#4d4d4d" stroke="#4d4d4d"><path fill="none" stroke-width="2" d="M1.6 6.5V3.8a2.6 2.6 0 0 1 5.2 0V5"/><path stroke="none" fill-rule="evenodd" d="M4.5 5.5h9.5V13H4.5zM8.6 7.6v3.2h1.4V7.6z"/></svg>
<div style="left:683px;top:483px;width:1px;height:30px;background:linear-gradient(to bottom,rgba(134,134,134,0),#888 30%,#888 70%,rgba(134,134,134,0));"></div>
<svg class="i" style="left:695.5px;top:491px;" width="14" height="14" viewBox="0 0 14 14" fill="#4d4d4d" stroke="#4d4d4d"><path fill="none" stroke-width="1" d="M0.500 2.500h13v11h-13zM9.300 5.500h4.200M9.300 8h4.200M9.300 10.500h4.200M0.500 5.500h4.200M0.500 8h4.200M0.500 10.500h4.200"/><path fill="none" stroke-width="1.600" d="M7 0.800v12.400"/><path fill="none" stroke-width="1.200" d="M4.600 0.600h4.800M4.600 13.400h4.800"/></svg>
<svg class="i" style="left:724px;top:492.5px;" width="14" height="12" viewBox="0 0 14 12" fill="#898a8c" stroke="#898a8c"><path fill="none" stroke-width="2.2" d="M3 4.5h5.2a3.6 3.6 0 0 1 0 7.2"/><path stroke="none" d="M0 4.5L4.8 0.6v7.8z"/></svg>
<svg class="i" style="left:754px;top:491px;" width="12" height="15" viewBox="0 0 12 15" fill="#898a8c" stroke="#898a8c"><path fill="none" stroke-width="1" d="M1.500 0.500h9v6h-9zM1.500 2.500h9M1.500 4.500h9M4.500 0.500v6M7.500 0.500v6"/><path stroke="none" d="M0 7h12v7.500H0zM2 10v3h8v-3z" fill-rule="evenodd"/></svg>
<div style="left:779px;top:483px;width:1px;height:30px;background:linear-gradient(to bottom,rgba(134,134,134,0),#888 30%,#888 70%,rgba(134,134,134,0));"></div>
<div style="left:787px;top:483px;width:1px;height:30px;background:linear-gradient(to bottom,rgba(134,134,134,0),#888 30%,#888 70%,rgba(134,134,134,0));"></div>
<svg class="i" style="left:799.5px;top:492px;" width="12" height="12" viewBox="0 0 12 12" fill="#898a8c" stroke="#898a8c"><path fill="none" stroke-width="1" d="M0.500 0.500h11v11h-11z"/><path fill="none" stroke-width="0.900" d="M3 1v10M4.700 1v10M7.300 1v10M9 1v10"/><path stroke="none" d="M0.500 0.500h11v1.500h-11z"/></svg>
<svg class="i" style="left:826.5px;top:491px;" width="14" height="14" viewBox="0 0 14 14" fill="#4d4d4d" stroke="#4d4d4d"><path fill="none" stroke-width="1" stroke-dasharray="2.2 1.2" d="M0.5 0.5h13v13h-13z"/><path stroke="none" d="M2.5 6h6v6h-6z"/><path fill="none" stroke-width="1.3" d="M8.5 5.5l3.5-3.5M9 2h3v3"/></svg>
<div style="left:852px;top:483px;width:1px;height:30px;background:linear-gradient(to bottom,rgba(134,134,134,0),#888 30%,#888 70%,rgba(134,134,134,0));"></div>
<svg class="i" style="left:866.5px;top:492.5px;" width="11" height="11" viewBox="0 0 11 11" fill="#898a8c" stroke="#898a8c"><path stroke="none" d="M8 0h3v8.4H5V11L0 6.8 5 2.6v2.8h3z"/></svg>
<div style="left:469px;top:513px;width:1437px;height:383px;background:#959698;border:1px solid #868686;box-sizing:border-box;"></div>
<div style="left:470px;top:513px;width:1435px;height:34px;background:#8f9193;"></div>
<div style="left:493px;top:514px;width:1px;height:33px;background:#87898c;"></div>
<div style="left:517px;top:514px;width:1px;height:33px;background:#87898c;"></div>
<div style="left:709px;top:514px;width:1px;height:33px;background:#87898c;"></div>
<div style="left:808px;top:514px;width:1px;height:33px;background:#87898c;"></div>
<div style="left:899px;top:514px;width:1px;height:33px;background:#87898c;"></div>
<div style="left:1045px;top:514px;width:1px;height:33px;background:#87898c;"></div>
<div style="left:1145px;top:514px;width:1px;height:33px;background:#87898c;"></div>
<div style="left:1218px;top:514px;width:1px;height:33px;background:#87898c;"></div>
<div style="left:1472px;top:514px;width:1px;height:33px;background:#87898c;"></div>
<div style="left:1699px;top:514px;width:1px;height:33px;background:#87898c;"></div>
<div style="left:1844px;top:514px;width:1px;height:33px;background:#87898c;"></div>
<div style="left:470px;top:547px;width:1435px;height:1px;background:#87898c;"></div>
<svg class="i" style="left:500px;top:525px;" width="11" height="11" viewBox="0 0 11 11" fill="#937a2a" stroke="#937a2a"><path stroke="none" d="M5.500 0l1.600 3.800 4 .300-3 2.700.9 4L5.500 8.700 2 10.800l.9-4-3-2.700 4-.300z"/></svg>
<span class="t " style="top:523.5px;font-size:12px;line-height:14px;left:523px;color:#0c0c0c;font-weight:bold;letter-spacing:-0.150px;">ID</span>
<span class="t " style="top:523.5px;font-size:12px;line-height:14px;left:715px;color:#0c0c0c;font-weight:bold;letter-spacing:-0.150px;">Shipment ID</span>
<span class="t " style="top:523.5px;font-size:12px;line-height:14px;left:830px;color:#0c0c0c;font-weight:bold;letter-spacing:-0.150px;">Indicator</span>
<span class="t " style="top:523.5px;font-size:12px;line-height:14px;left:906px;color:#0c0c0c;font-weight:bold;letter-spacing:-0.150px;">Service Provider ID</span>
<span class="t " style="top:523.5px;font-size:12px;line-height:14px;left:1051.5px;color:#0c0c0c;font-weight:bold;letter-spacing:-0.150px;">Shipment Type</span>
<span class="t " style="top:523.5px;font-size:12px;line-height:14px;left:1151px;color:#0c0c0c;font-weight:bold;letter-spacing:-0.150px;">Mode</span>
<span class="t " style="top:523.5px;font-size:12px;line-height:14px;left:1224.5px;color:#0c0c0c;font-weight:bold;letter-spacing:-0.150px;">Status</span>
<span class="t " style="top:523.5px;font-size:12px;line-height:14px;left:1478.5px;color:#0c0c0c;font-weight:bold;letter-spacing:-0.150px;">Status</span>
<span class="t " style="top:523.5px;font-size:12px;line-height:14px;right:76px;color:#0c0c0c;font-weight:bold;letter-spacing:-0.150px;">Total Actual Cost</span>
<span class="t " style="top:523.5px;font-size:12px;line-height:14px;left:1878px;color:#0c0c0c;font-weight:bold;letter-spacing:-0.150px;">Total</span>
<div style="left:470px;top:548px;width:1435px;height:23px;background:#7a8b9e;"></div>
<div style="left:470px;top:548px;width:47px;height:23px;background:#6f89a1;"></div>
<div style="left:470px;top:571px;width:1435px;height:1px;background:#738499;"></div>
<div style="left:493px;top:548px;width:1px;height:23px;background:#738499;"></div>
<div style="left:517px;top:548px;width:1px;height:23px;background:#738499;"></div>
<div style="left:709px;top:548px;width:1px;height:23px;background:#738499;"></div>
<div style="left:808px;top:548px;width:1px;height:23px;background:#738499;"></div>
<div style="left:899px;top:548px;width:1px;height:23px;background:#738499;"></div>
<div style="left:1045px;top:548px;width:1px;height:23px;background:#738499;"></div>
<div style="left:1145px;top:548px;width:1px;height:23px;background:#738499;"></div>
<div style="left:1218px;top:548px;width:1px;height:23px;background:#738499;"></div>
<div style="left:1472px;top:548px;width:1px;height:23px;background:#738499;"></div>
<div style="left:1699px;top:548px;width:1px;height:23px;background:#738499;"></div>
<div style="left:1844px;top:548px;width:1px;height:23px;background:#738499;"></div>
<svg class="i" style="left:500px;top:554px;" width="11" height="11" viewBox="0 0 11 11" fill="#74899d" stroke="#74899d"><path stroke="none" d="M5.500 0l1.600 3.800 4 .300-3 2.700.9 4L5.500 8.700 2 10.800l.9-4-3-2.700 4-.300z"/></svg>
<span class="t " style="top:552.5px;font-size:11px;line-height:14px;left:523px;color:#3f1f5c;">OOTB.05037</span>
<span class="t " style="top:552.5px;font-size:11px;line-height:14px;left:714px;color:#222;">05037</span>
<svg class="i" style="left:847px;top:553px" width="14" height="14" viewBox="0 0 14 14"><circle cx="7" cy="7" r="5.600" fill="#a4a5a6" stroke="#4c4d4f" stroke-width="1.300"/></svg>
<span class="t " style="top:552.5px;font-size:11px;line-height:14px;left:905px;color:#213a56;">OCEAN CARRIER</span>
<span class="t " style="top:552.5px;font-size:11px;line-height:14px;left:1049.5px;color:#213a56;">TRANSPORT</span>
<span class="t " style="top:552.5px;font-size:11px;line-height:14px;left:1150px;color:#213a56;">VESSEL-CO</span>
<span class="t " style="top:552.5px;font-size:11px;line-height:14px;left:1223px;color:#222;">SECURE RESOURCES_NOT STARTED</span>
<span class="t " style="top:552.5px;font-size:11px;line-height:14px;left:1477px;color:#222;">REVIEWED_NOT REVIEWED</span>
<span class="t " style="top:552.5px;font-size:11px;line-height:14px;right:77px;color:#222;">5,950.00 USD</span>
<div style="left:470px;top:571px;width:1435px;height:23px;background:#9a9a9b;"></div>
<div style="left:470px;top:594px;width:1435px;height:1px;background:#919294;"></div>
<div style="left:493px;top:571px;width:1px;height:23px;background:#919294;"></div>
<div style="left:517px;top:571px;width:1px;height:23px;background:#919294;"></div>
<div style="left:709px;top:571px;width:1px;height:23px;background:#919294;"></div>
<div style="left:808px;top:571px;width:1px;height:23px;background:#919294;"></div>
<div style="left:899px;top:571px;width:1px;height:23px;background:#919294;"></div>
<div style="left:1045px;top:571px;width:1px;height:23px;background:#919294;"></div>
<div style="left:1145px;top:571px;width:1px;height:23px;background:#919294;"></div>
<div style="left:1218px;top:571px;width:1px;height:23px;background:#919294;"></div>
<div style="left:1472px;top:571px;width:1px;height:23px;background:#919294;"></div>
<div style="left:1699px;top:571px;width:1px;height:23px;background:#919294;"></div>
<div style="left:1844px;top:571px;width:1px;height:23px;background:#919294;"></div>
<svg class="i" style="left:500px;top:577px;" width="11" height="11" viewBox="0 0 11 11" fill="#88898b" stroke="#88898b"><path stroke="none" d="M5.500 0l1.600 3.800 4 .300-3 2.700.9 4L5.500 8.700 2 10.800l.9-4-3-2.700 4-.300z"/></svg>
<span class="t " style="top:575.5px;font-size:11px;line-height:14px;left:523px;color:#213a56;">OOTB.05038</span>
<span class="t " style="top:575.5px;font-size:11px;line-height:14px;left:714px;color:#222;">05038</span>
<svg class="i" style="left:847px;top:576px" width="14" height="14" viewBox="0 0 14 14"><circle cx="7" cy="7" r="5.600" fill="#a4a5a6" stroke="#4c4d4f" stroke-width="1.300"/></svg>
<span class="t " style="top:575.5px;font-size:11px;line-height:14px;left:905px;color:#213a56;">OCEAN CARRIER</span>
<span class="t " style="top:575.5px;font-size:11px;line-height:14px;left:1049.5px;color:#213a56;">TRANSPORT</span>
<span class="t " style="top:575.5px;font-size:11px;line-height:14px;left:1150px;color:#213a56;">VESSEL-CO</span>
<span class="t " style="top:575.5px;font-size:11px;line-height:14px;left:1223px;color:#222;">SECURE RESOURCES_NOT STARTED</span>
<span class="t " style="top:575.5px;font-size:11px;line-height:14px;left:1477px;color:#222;">REVIEWED_NOT REVIEWED</span>
<span class="t " style="top:575.5px;font-size:11px;line-height:14px;right:77px;color:#222;">5,950.00 USD</span>
<div style="left:470px;top:594px;width:1435px;height:23px;background:#9a9a9b;"></div>
<div style="left:470px;top:617px;width:1435px;height:1px;background:#919294;"></div>
<div style="left:493px;top:594px;width:1px;height:23px;background:#919294;"></div>
<div style="left:517px;top:594px;width:1px;height:23px;background:#919294;"></div>
<div style="left:709px;top:594px;width:1px;height:23px;background:#919294;"></div>
<div style="left:808px;top:594px;width:1px;height:23px;background:#919294;"></div>
<div style="left:899px;top:594px;width:1px;height:23px;background:#919294;"></div>
<div style="left:1045px;top:594px;width:1px;height:23px;background:#919294;"></div>
<div style="left:1145px;top:594px;width:1px;height:23px;background:#919294;"></div>
<div style="left:1218px;top:594px;width:1px;height:23px;background:#919294;"></div>
<div style="left:1472px;top:594px;width:1px;height:23px;background:#919294;"></div>
<div style="left:1699px;top:594px;width:1px;height:23px;background:#919294;"></div>
<div style="left:1844px;top:594px;width:1px;height:23px;background:#919294;"></div>
<svg class="i" style="left:500px;top:600px;" width="11" height="11" viewBox="0 0 11 11" fill="#88898b" stroke="#88898b"><path stroke="none" d="M5.500 0l1.600 3.800 4 .300-3 2.700.9 4L5.500 8.700 2 10.800l.9-4-3-2.700 4-.300z"/></svg>
<span class="t " style="top:598.5px;font-size:11px;line-height:14px;left:523px;color:#213a56;">OOTB.05039</span>
<span class="t " style="top:598.5px;font-size:11px;line-height:14px;left:714px;color:#222;">05039</span>
<svg class="i" style="left:847px;top:599px" width="14" height="14" viewBox="0 0 14 14"><circle cx="7" cy="7" r="5.600" fill="#a4a5a6" stroke="#4c4d4f" stroke-width="1.300"/></svg>
<span class="t " style="top:598.5px;font-size:11px;line-height:14px;left:905px;color:#213a56;">OCEAN CARRIER</span>
<span class="t " style="top:598.5px;font-size:11px;line-height:14px;left:1049.5px;color:#213a56;">TRANSPORT</span>
<span class="t " style="top:598.5px;font-size:11px;line-height:14px;left:1150px;color:#213a56;">VESSEL-CO</span>
<span class="t " style="top:598.5px;font-size:11px;line-height:14px;left:1223px;color:#222;">SECURE RESOURCES_NOT STARTED</span>
<span class="t " style="top:598.5px;font-size:11px;line-height:14px;left:1477px;color:#222;">REVIEWED_NOT REVIEWED</span>
<span class="t " style="top:598.5px;font-size:11px;line-height:14px;right:77px;color:#222;">5,950.00 USD</span>
<div style="left:470px;top:617px;width:1435px;height:23px;background:#9a9a9b;"></div>
<div style="left:470px;top:640px;width:1435px;height:1px;background:#919294;"></div>
<div style="left:493px;top:617px;width:1px;height:23px;background:#919294;"></div>
<div style="left:517px;top:617px;width:1px;height:23px;background:#919294;"></div>
<div style="left:709px;top:617px;width:1px;height:23px;background:#919294;"></div>
<div style="left:808px;top:617px;width:1px;height:23px;background:#919294;"></div>
<div style="left:899px;top:617px;width:1px;height:23px;background:#919294;"></div>
<div style="left:1045px;top:617px;width:1px;height:23px;background:#919294;"></div>
<div style="left:1145px;top:617px;width:1px;height:23px;background:#919294;"></div>
<div style="left:1218px;top:617px;width:1px;height:23px;background:#919294;"></div>
<div style="left:1472px;top:617px;width:1px;height:23px;background:#919294;"></div>
<div style="left:1699px;top:617px;width:1px;height:23px;background:#919294;"></div>
<div style="left:1844px;top:617px;width:1px;height:23px;background:#919294;"></div>
<svg class="i" style="left:500px;top:623px;" width="11" height="11" viewBox="0 0 11 11" fill="#88898b" stroke="#88898b"><path stroke="none" d="M5.500 0l1.600 3.800 4 .300-3 2.700.9 4L5.500 8.700 2 10.800l.9-4-3-2.700 4-.300z"/></svg>
<span class="t " style="top:621.5px;font-size:11px;line-height:14px;left:523px;color:#213a56;">OOTB.05040</span>
<span class="t " style="top:621.5px;font-size:11px;line-height:14px;left:714px;color:#222;">05040</span>
<svg class="i" style="left:847px;top:622px" width="14" height="14" viewBox="0 0 14 14"><circle cx="7" cy="7" r="5.600" fill="#a4a5a6" stroke="#4c4d4f" stroke-width="1.300"/></svg>
<span class="t " style="top:621.5px;font-size:11px;line-height:14px;left:905px;color:#213a56;">OCEAN CARRIER</span>
<span class="t " style="top:621.5px;font-size:11px;line-height:14px;left:1049.5px;color:#213a56;">TRANSPORT</span>
<span class="t " style="top:621.5px;font-size:11px;line-height:14px;left:1150px;color:#213a56;">VESSEL-CO</span>
<span class="t " style="top:621.5px;font-size:11px;line-height:14px;left:1223px;color:#222;">SECURE RESOURCES_NOT STARTED</span>
<span class="t " style="top:621.5px;font-size:11px;line-height:14px;left:1477px;color:#222;">REVIEWED_NOT REVIEWED</span>
<span class="t " style="top:621.5px;font-size:11px;line-height:14px;right:77px;color:#222;">5,950.00 USD</span>
<div style="left:470px;top:640px;width:1435px;height:23px;background:#9a9a9b;"></div>
<div style="left:470px;top:663px;width:1435px;height:1px;background:#919294;"></div>
<div style="left:493px;top:640px;width:1px;height:23px;background:#919294;"></div>
<div style="left:517px;top:640px;width:1px;height:23px;background:#919294;"></div>
<div style="left:709px;top:640px;width:1px;height:23px;background:#919294;"></div>
<div style="left:808px;top:640px;width:1px;height:23px;background:#919294;"></div>
<div style="left:899px;top:640px;width:1px;height:23px;background:#919294;"></div>
<div style="left:1045px;top:640px;width:1px;height:23px;background:#919294;"></div>
<div style="left:1145px;top:640px;width:1px;height:23px;background:#919294;"></div>
<div style="left:1218px;top:640px;width:1px;height:23px;background:#919294;"></div>
<div style="left:1472px;top:640px;width:1px;height:23px;background:#919294;"></div>
<div style="left:1699px;top:640px;width:1px;height:23px;background:#919294;"></div>
<div style="left:1844px;top:640px;width:1px;height:23px;background:#919294;"></div>
<svg class="i" style="left:500px;top:646px;" width="11" height="11" viewBox="0 0 11 11" fill="#88898b" stroke="#88898b"><path stroke="none" d="M5.500 0l1.600 3.800 4 .300-3 2.700.9 4L5.500 8.700 2 10.800l.9-4-3-2.700 4-.300z"/></svg>
<span class="t " style="top:644.5px;font-size:11px;line-height:14px;left:523px;color:#213a56;">OOTB.05041</span>
<span class="t " style="top:644.5px;font-size:11px;line-height:14px;left:714px;color:#222;">05041</span>
<svg class="i" style="left:847px;top:645px" width="14" height="14" viewBox="0 0 14 14"><circle cx="7" cy="7" r="5.600" fill="#a4a5a6" stroke="#4c4d4f" stroke-width="1.300"/></svg>
<span class="t " style="top:644.5px;font-size:11px;line-height:14px;left:905px;color:#213a56;">OCEAN CARRIER</span>
<span class="t " style="top:644.5px;font-size:11px;line-height:14px;left:1049.5px;color:#213a56;">TRANSPORT</span>
<span class="t " style="top:644.5px;font-size:11px;line-height:14px;left:1150px;color:#213a56;">VESSEL-CO</span>
<span class="t " style="top:644.5px;font-size:11px;line-height:14px;left:1223px;color:#222;">SECURE RESOURCES_NOT STARTED</span>
<span class="t " style="top:644.5px;font-size:11px;line-height:14px;left:1477px;color:#222;">REVIEWED_NOT REVIEWED</span>
<span class="t " style="top:644.5px;font-size:11px;line-height:14px;right:77px;color:#222;">5,950.00 USD</span>
<div style="left:517px;top:879px;width:1388px;height:15px;background:#929395;"></div>
<div style="left:536px;top:880px;width:690px;height:13px;background:#777777;"></div>
<svg class="i" style="left:524px;top:882.5px" width="4.500" height="8" viewBox="0 0 5 9" fill="#6d6e70"><path d="M5 0v9L0 4.500z"/></svg>
<svg class="i" style="left:1893px;top:882.5px" width="4.500" height="8" viewBox="0 0 5 9" fill="#1a1a1a"><path d="M0 0v9l5-4.500z"/></svg>
<span class="t " style="top:902px;font-size:11px;line-height:14px;left:478px;color:#1a1a1a;word-spacing:1px;letter-spacing:0.090px;">Rows Selected</span>
<span class="t " style="top:902px;font-size:11px;line-height:14px;right:1350.4px;color:#1a1a1a;">1</span>
<div style="left:570px;top:896px;width:1px;height:24px;background:#868686;"></div>
<div style="left:591px;top:896px;width:1px;height:24px;background:#868686;"></div>
<div style="left:1600px;top:896px;width:1px;height:29px;background:#868686;"></div>
<div style="left:1738px;top:896px;width:1px;height:29px;background:#868686;"></div>
<span class="t " style="top:901px;font-size:11px;line-height:14px;left:1615px;color:#1a1a1a;">Associated Master Table:</span>
<span class="t " style="top:900px;font-size:11px;line-height:14px;left:1761px;color:#1a1a1a;">Records 5 of 5</span>
<span class="t " style="top:901px;font-size:11px;line-height:14px;left:1843px;color:#6f7072;">More</span>
<span class="t " style="top:901px;font-size:11px;line-height:14px;left:1880.5px;color:#6f7072;">All</span>
<div style="left:469px;top:925px;width:1435px;height:1px;background:#868686;"></div>
<div style="left:469px;top:150px;width:381px;height:171px;background:#fafafa;box-shadow:0 2px 8px rgba(0,0,0,.45);"></div>
<div style="left:469px;top:150px;width:381px;height:28px;background:linear-gradient(#f5f5f5,#ededed);border-bottom:1px solid #d0d0d0;"></div>
<svg class="i" style="left:479.800px;top:158.600px" width="12.400" height="12.400" viewBox="0 0 13 13"><circle cx="6.500" cy="6.500" r="6.500" fill="#0a72cf"/></svg>
<span class="t " style="top:159.3px;font-size:10px;line-height:12px;left:484.5px;color:#fff;font-weight:bold;font-family:'Liberation Serif',serif;">i</span>
<span class="t " style="top:154.5px;font-size:14px;line-height:18px;left:503px;color:#222;">Information</span>
<svg class="i" style="left:825.05px;top:159.55px;" width="9.5" height="9.5" viewBox="0 0 10 10" fill="#222" stroke="#222"><path fill="none" stroke-width="2" d="M1 1l8 8M9 1l-8 8"/></svg>
<span class="t " style="top:220px;font-size:11px;line-height:12px;left:478px;color:#333;">Add Shipments to Group action completed successfully for [OOTB.05041,</span>
<span class="t " style="top:232px;font-size:11px;line-height:12px;left:478px;color:#333;">OOTB.05040, OOTB.05039, OOTB.05038] [OOTB.20200312-0004]</span>
<div style="left:807px;top:286.5px;width:32px;height:24px;background:linear-gradient(#e9ecee,#e2e6e9);border:1px solid #c0c3c6;box-sizing:border-box;"></div>
<span class="t " style="top:291px;font-size:11px;line-height:14px;left:815px;color:#111;">OK</span>
</body></html>
